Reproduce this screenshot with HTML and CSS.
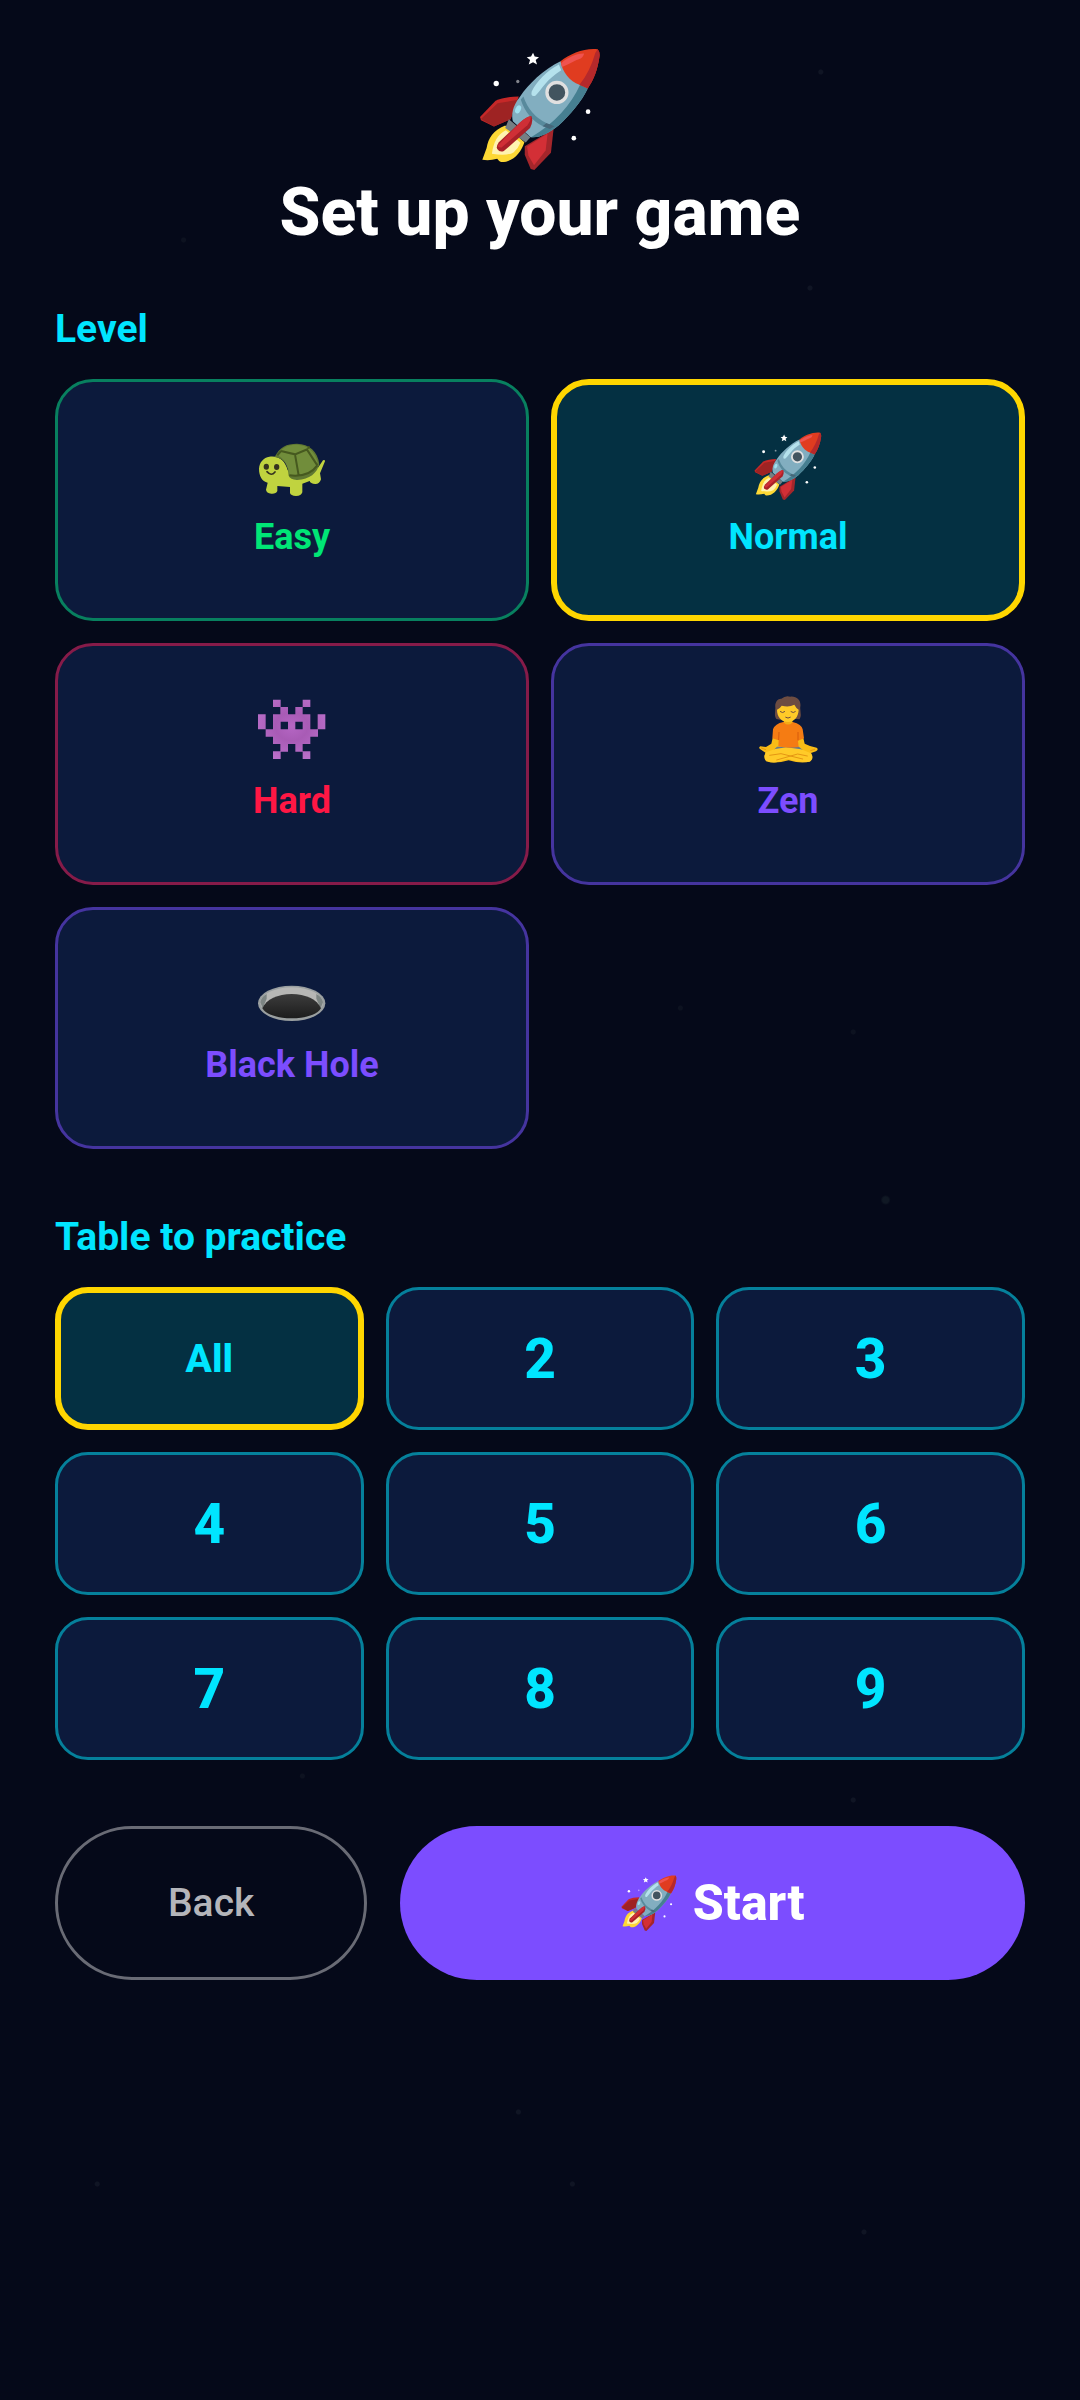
FILE: index.html
```html
<!DOCTYPE html>
<html lang="en">
<head>
    <meta charset="UTF-8">
    <meta name="viewport" content="width=device-width, initial-scale=1">
    <title>Set up your game</title>
    <link rel="stylesheet" href="styles.css">
</head>
<body>
    <!-- Shared icons -->
    <svg class="sprite" aria-hidden="true">
        <symbol id="rocket" viewBox="56 52 368 368">
            <path fill="#c62828" d="M176 198C150 198 122 203 106 211L59 260L62 270L101 289L151 267Z"/>
            <path fill="#9e2323" d="M174 208L112 219L62 266L101 289L151 267Z"/>
            <path fill="#a4262b" d="M194 348L281 296L273 368L223 420L212 417L194 374Z"/>
            <path fill="#d32f36" d="M201 349L263 310L257 361L222 406L205 376Z"/>
            <path fill="#fdd835" d="M135 286C98 300 84 325 79 354L66 389Q87 393 111 386Q119 396 123 396C157 397 183 368 193 336Z"/>
            <path fill="#fff3b0" d="M137 300C112 312 99 337 95 371Q139 379 160 367Q174 356 181 338Z"/>
            <path fill="#757f84" d="M146 267L211 321L197 337L135 293Z"/>
            <path fill="#82aec0" d="M302 92C251 116 204 162 180 198C155 230 154 253 158 273L212 321C239 324 267 309 296 286C331 253 366 213 384 174Z"/>
            <path fill="#467f91" d="M361 163C333 224 285 279 213 321C239 324 267 309 296 286C331 253 366 213 384 174Z"/>
            <path fill="#588a9c" d="M190 198Q209 254 259 278L250 289Q199 262 182 207Z"/>
            <path fill="#466779" d="M259 278L284 288L270 296L248 288Z"/>
            <path fill="#b5e2ed" d="M297 102C262 120 229 154 215 183Q211 200 226 196C245 177 260 146 304 119Z"/>
            <ellipse cx="174" cy="237" rx="8" ry="13" fill="#9fe0ef" transform="rotate(24 174 237)"/>
            <path fill="#e03c20" d="M302 92C330 69 377 51 414 56Q422 65 419 81C414 116 402 149 384 174L359 163C330 153 307 124 302 92Z"/>
            <path fill="#b5292b" d="M407 66Q391 123 359 163L384 174C402 149 414 116 419 81Q422 65 414 56Z"/>
            <path fill="#ef5350" d="M304 98C320 83 350 68 373 69Q370 81 357 86C339 92 327 103 306 109Z"/>
            <circle cx="291" cy="186" r="30" fill="#42545f" stroke="#e0e0e0" stroke-width="10"/>
            <path fill="#a92028" d="M214 257Q221 271 210 293L131 363Q119 368 111 357Q107 348 116 336L178 278Q202 257 214 257Z"/>
            <path fill="#cf2f36" d="M212 258Q214 271 202 285L124 352Q114 353 112 347L178 278Q202 257 212 258Z"/>
            <g fill="#fff">
                <path d="M219 66L224 78L237 80L227 88L231 102L219 95L206 102L210 88L200 80L213 78Z"/>
                <circle cx="108" cy="159" r="8"/>
                <circle cx="385" cy="244" r="7"/>
                <circle cx="342" cy="324" r="7"/>
                <circle cx="173" cy="153" r="5" opacity=".5"/>
            </g>
        </symbol>
    </svg>

    <main class="setup">
        <header class="setup-header">
            <svg class="hero-icon" aria-hidden="true"><use href="#rocket"/></svg>
            <h1>Set up your game</h1>
        </header>

        <section class="section">
            <h2 id="levelTitle">Level</h2>
            <div class="level-grid" role="group" aria-labelledby="levelTitle">
                <button type="button" class="card level easy" aria-pressed="false">
                    <svg class="level-icon" viewBox="54 39 204 204" aria-hidden="true">
                        <path fill="#c0d33f" d="M88 113C118 109 136 126 143 154L235 145L249 124Q255 121 255 127L240 163L243 181Q239 195 226 195Q211 194 209 186L187 194V220Q184 231 168 231Q152 230 150 222V204L112 201V216Q108 225 94 224Q79 222 78 212L83 191C66 187 57 171 57 149C58 130 71 115 88 113Z"/>
                        <path fill="#5f7732" d="M104 114C119 84 139 74 171 74C207 75 234 97 238 136C232 161 207 184 170 183Q151 181 146 170C144 145 139 119 104 114Z"/>
                        <path fill="#718d3b" d="M112 109C124 87 142 76 171 77C201 79 225 94 233 130C224 154 206 172 149 170C145 139 132 118 112 109Z"/>
                        <path fill="none" stroke="#46591f" stroke-width="6" d="M123 96L165 106L204 90M165 106L176 169M201 92L232 139M205 89L207 82M123 96L112 109M148 169Q206 176 232 139"/>
                        <g fill="#35331f">
                            <ellipse cx="79" cy="143" rx="8" ry="9"/>
                            <ellipse cx="110" cy="144" rx="8" ry="9"/>
                        </g>
                        <path fill="none" stroke="#35331f" stroke-width="5" stroke-linecap="round" d="M81 158Q94 173 105 159"/>
                    </svg>
                    <span>Easy</span>
                </button>
                <button type="button" class="card level normal selected" aria-pressed="true">
                    <svg class="level-icon" aria-hidden="true"><use href="#rocket"/></svg>
                    <span>Normal</span>
                </button>
                <button type="button" class="card level hard" aria-pressed="false">
                    <svg class="level-icon" viewBox="54 51 204 204" aria-hidden="true">
                        <defs>
                            <radialGradient id="alienFill" cx=".5" cy=".45" r=".6">
                                <stop offset="0" stop-color="#b566c4"/>
                                <stop offset=".4" stop-color="#a85bb5"/>
                                <stop offset="1" stop-color="#bb70cb"/>
                            </radialGradient>
                        </defs>
                        <path fill="url(#alienFill)" fill-rule="evenodd" d="M99 62H122V84H144V106H166V84H188V62H211V84H188V106H211V151H233V106H256V151H234V173H211V195H188V217H211V240H188V218H166V195H144V218H122V240H99V217H121V195H99V173H77V151H54V106H77V151H99V106H121V84H99ZM122 128V151H144V128ZM166 128V151H188V128Z"/>
                    </svg>
                    <span>Hard</span>
                </button>
                <button type="button" class="card level zen" aria-pressed="false">
                    <svg class="level-icon" viewBox="42 51 204 204" aria-hidden="true">
                        <path fill="#f9bc16" d="M98 177L94 194L78 204L61 202Q54 206 61 211L77 221Q69 235 78 247Q104 256 146 244Q187 256 211 247Q220 236 213 222L228 217Q237 211 230 206L210 201L194 194L190 177Z"/>
                        <path fill="#687987" d="M111 203L177 203L188 213L144 224L102 212Z"/>
                        <path fill="#ffca28" d="M77 220L106 210L138 205L183 211L213 223Q224 239 209 248Q181 252 143 239L109 250Q82 252 75 241Q71 231 77 220Z"/>
                        <path fill="none" stroke="#e59613" stroke-width="3" stroke-linecap="round" d="M89 229L123 224L188 240M202 231L173 225L110 243M64 207L77 212M224 211L212 215"/>
                        <path fill="#f57c13" d="M130 129H158Q185 136 188 151L192 178L174 185L176 204Q143 209 115 202L116 184L97 178L99 151Q105 134 130 129Z"/>
                        <path fill="none" stroke="#d65a0d" stroke-width="3" d="M117 159L116 183M174 159L174 184"/>
                        <path fill="#f4ac16" d="M132 115H157V131Q144 142 132 131Z"/>
                        <path fill="#6d4c41" d="M109 120C101 108 107 98 106 85C104 70 113 58 124 59Q137 48 151 53C172 51 184 66 181 83C179 96 187 109 178 121L162 119L121 122Z"/>
                        <path fill="#ffca28" d="M111 92Q121 87 125 80Q147 86 163 77Q168 87 176 92C175 114 162 129 144 129C124 129 111 113 111 92Z"/>
                        <path fill="none" stroke="#6d4c41" stroke-width="3" stroke-linecap="round" d="M121 98Q128 104 134 98M153 98Q160 104 166 98M137 115Q144 120 151 115"/>
                    </svg>
                    <span>Zen</span>
                </button>
                <button type="button" class="card level black-hole" aria-pressed="false">
                    <svg class="level-icon" viewBox="54 3 204 204" aria-hidden="true">
                        <defs>
                            <linearGradient id="holeFill" x1="0" y1="0" x2="0" y2="1">
                                <stop offset="0" stop-color="#3c3c3c"/>
                                <stop offset="1" stop-color="#1c1c1c"/>
                            </linearGradient>
                        </defs>
                        <ellipse cx="155" cy="133" rx="101" ry="53" fill="#9a9fa0"/>
                        <ellipse cx="155" cy="131" rx="94" ry="46" fill="#b7b7b5"/>
                        <path fill="#7d8583" d="M61 130Q65 112 80 105V119L68 148ZM249 130Q245 112 229 105V119L242 148Z"/>
                        <path fill="url(#holeFill)" d="M67 148C78 121 114 105 155 105C196 105 232 121 243 148C231 168 195 178 155 178C115 178 79 168 67 148Z"/>
                    </svg>
                    <span>Black Hole</span>
                </button>
            </div>
        </section>

        <section class="section">
            <h2 id="tableTitle">Table to practice</h2>
            <div class="table-grid" role="group" aria-labelledby="tableTitle">
                <button type="button" class="card number all selected" aria-pressed="true">All</button>
                <button type="button" class="card number" aria-pressed="false">2</button>
                <button type="button" class="card number" aria-pressed="false">3</button>
                <button type="button" class="card number" aria-pressed="false">4</button>
                <button type="button" class="card number" aria-pressed="false">5</button>
                <button type="button" class="card number" aria-pressed="false">6</button>
                <button type="button" class="card number" aria-pressed="false">7</button>
                <button type="button" class="card number" aria-pressed="false">8</button>
                <button type="button" class="card number" aria-pressed="false">9</button>
            </div>
        </section>

        <div class="actions">
            <button type="button" class="back-button">Back</button>
            <button type="button" class="start-button">
                <svg class="start-icon" aria-hidden="true"><use href="#rocket"/></svg>
                <span>Start</span>
            </button>
        </div>
    </main>
</body>
</html>
```
FILE: styles.css
```css
* {
    box-sizing: border-box;
}

body {
    margin: 0;
    min-height: 100vh;
    font-family: Roboto, "Liberation Sans", sans-serif;
    color: #fff;
    background-color: #050919;
    /* faint stars */
    background-image:
        radial-gradient(circle at 76% 3%, #101524 2px, transparent 3px),
        radial-gradient(circle at 75% 12%, #101524 2px, transparent 3px),
        radial-gradient(circle at 17% 10%, #0d1220 2px, transparent 3px),
        radial-gradient(circle at 82% 50%, #101824 3px, transparent 5px),
        radial-gradient(circle at 63% 42%, #0d1220 2px, transparent 3px),
        radial-gradient(circle at 79% 43%, #0d1220 2px, transparent 3px),
        radial-gradient(circle at 28% 74%, #0d1220 2px, transparent 3px),
        radial-gradient(circle at 79% 75%, #101524 2px, transparent 3px),
        radial-gradient(circle at 48% 88%, #101524 2px, transparent 3px),
        radial-gradient(circle at 53% 91%, #101524 2px, transparent 3px),
        radial-gradient(circle at 80% 93%, #101524 2px, transparent 3px),
        radial-gradient(circle at 9% 91%, #101524 2px, transparent 3px);
}

.sprite {
    display: none;
}

.setup {
    padding: 48px 55px;
}

.setup-header {
    display: flex;
    flex-direction: column;
    align-items: center;
    gap: 4px;
    margin-bottom: 55px;
}

.hero-icon {
    width: 122px;
    height: 122px;
}

h1 {
    margin: 0;
    font-size: 66px;
    line-height: 78px;
    font-weight: 800;
    text-align: center;
}

.section {
    margin-bottom: 66px;
}

h2 {
    margin: 0 0 27px;
    font-size: 39px;
    line-height: 45px;
    font-weight: 700;
    color: #00e5ff;
}

button {
    font-family: inherit;
    cursor: pointer;
}

.level-grid {
    display: grid;
    grid-template-columns: repeat(2, 1fr);
    gap: 22px;
}

.table-grid {
    display: grid;
    grid-template-columns: repeat(3, 1fr);
    gap: 22px;
}

.card {
    display: flex;
    align-items: center;
    justify-content: center;
    padding: 0;
    border: 3px solid #05809b;
    background-color: #0c1a3c;
    color: #00e5ff;
    font-weight: 700;
}

.card.selected {
    border: 6px solid #ffd600;
    background-color: #043042;
}

.level {
    flex-direction: column;
    gap: 12px;
    min-height: 242px;
    padding-bottom: 6px;
    border-radius: 38px;
    font-size: 36px;
    line-height: 50px;
}

.level-icon {
    width: 68px;
    height: 68px;
}

.easy {
    border-color: #08805f;
    color: #00e676;
}

.hard {
    border-color: #861b49;
    color: #ff1744;
}

.zen,
.black-hole {
    border-color: #45349f;
    color: #7c4dff;
}

.number {
    min-height: 143px;
    border-radius: 33px;
    font-size: 55px;
    line-height: 64px;
    font-weight: 800;
}

.all {
    font-size: 39px;
}

.actions {
    display: grid;
    grid-template-columns: 1fr 2fr;
    gap: 33px;
}

.back-button,
.start-button {
    min-height: 154px;
    padding: 0;
    border-radius: 77px;
}

.back-button {
    border: 3px solid #696b75;
    background-color: transparent;
    color: #b4b5ba;
    font-size: 39px;
    font-weight: 500;
}

.start-button {
    display: flex;
    align-items: center;
    justify-content: center;
    gap: 16px;
    border: none;
    background-color: #7c4dff;
    color: #fff;
    font-size: 50px;
    font-weight: 800;
}

.start-icon {
    width: 56px;
    height: 56px;
}
```
